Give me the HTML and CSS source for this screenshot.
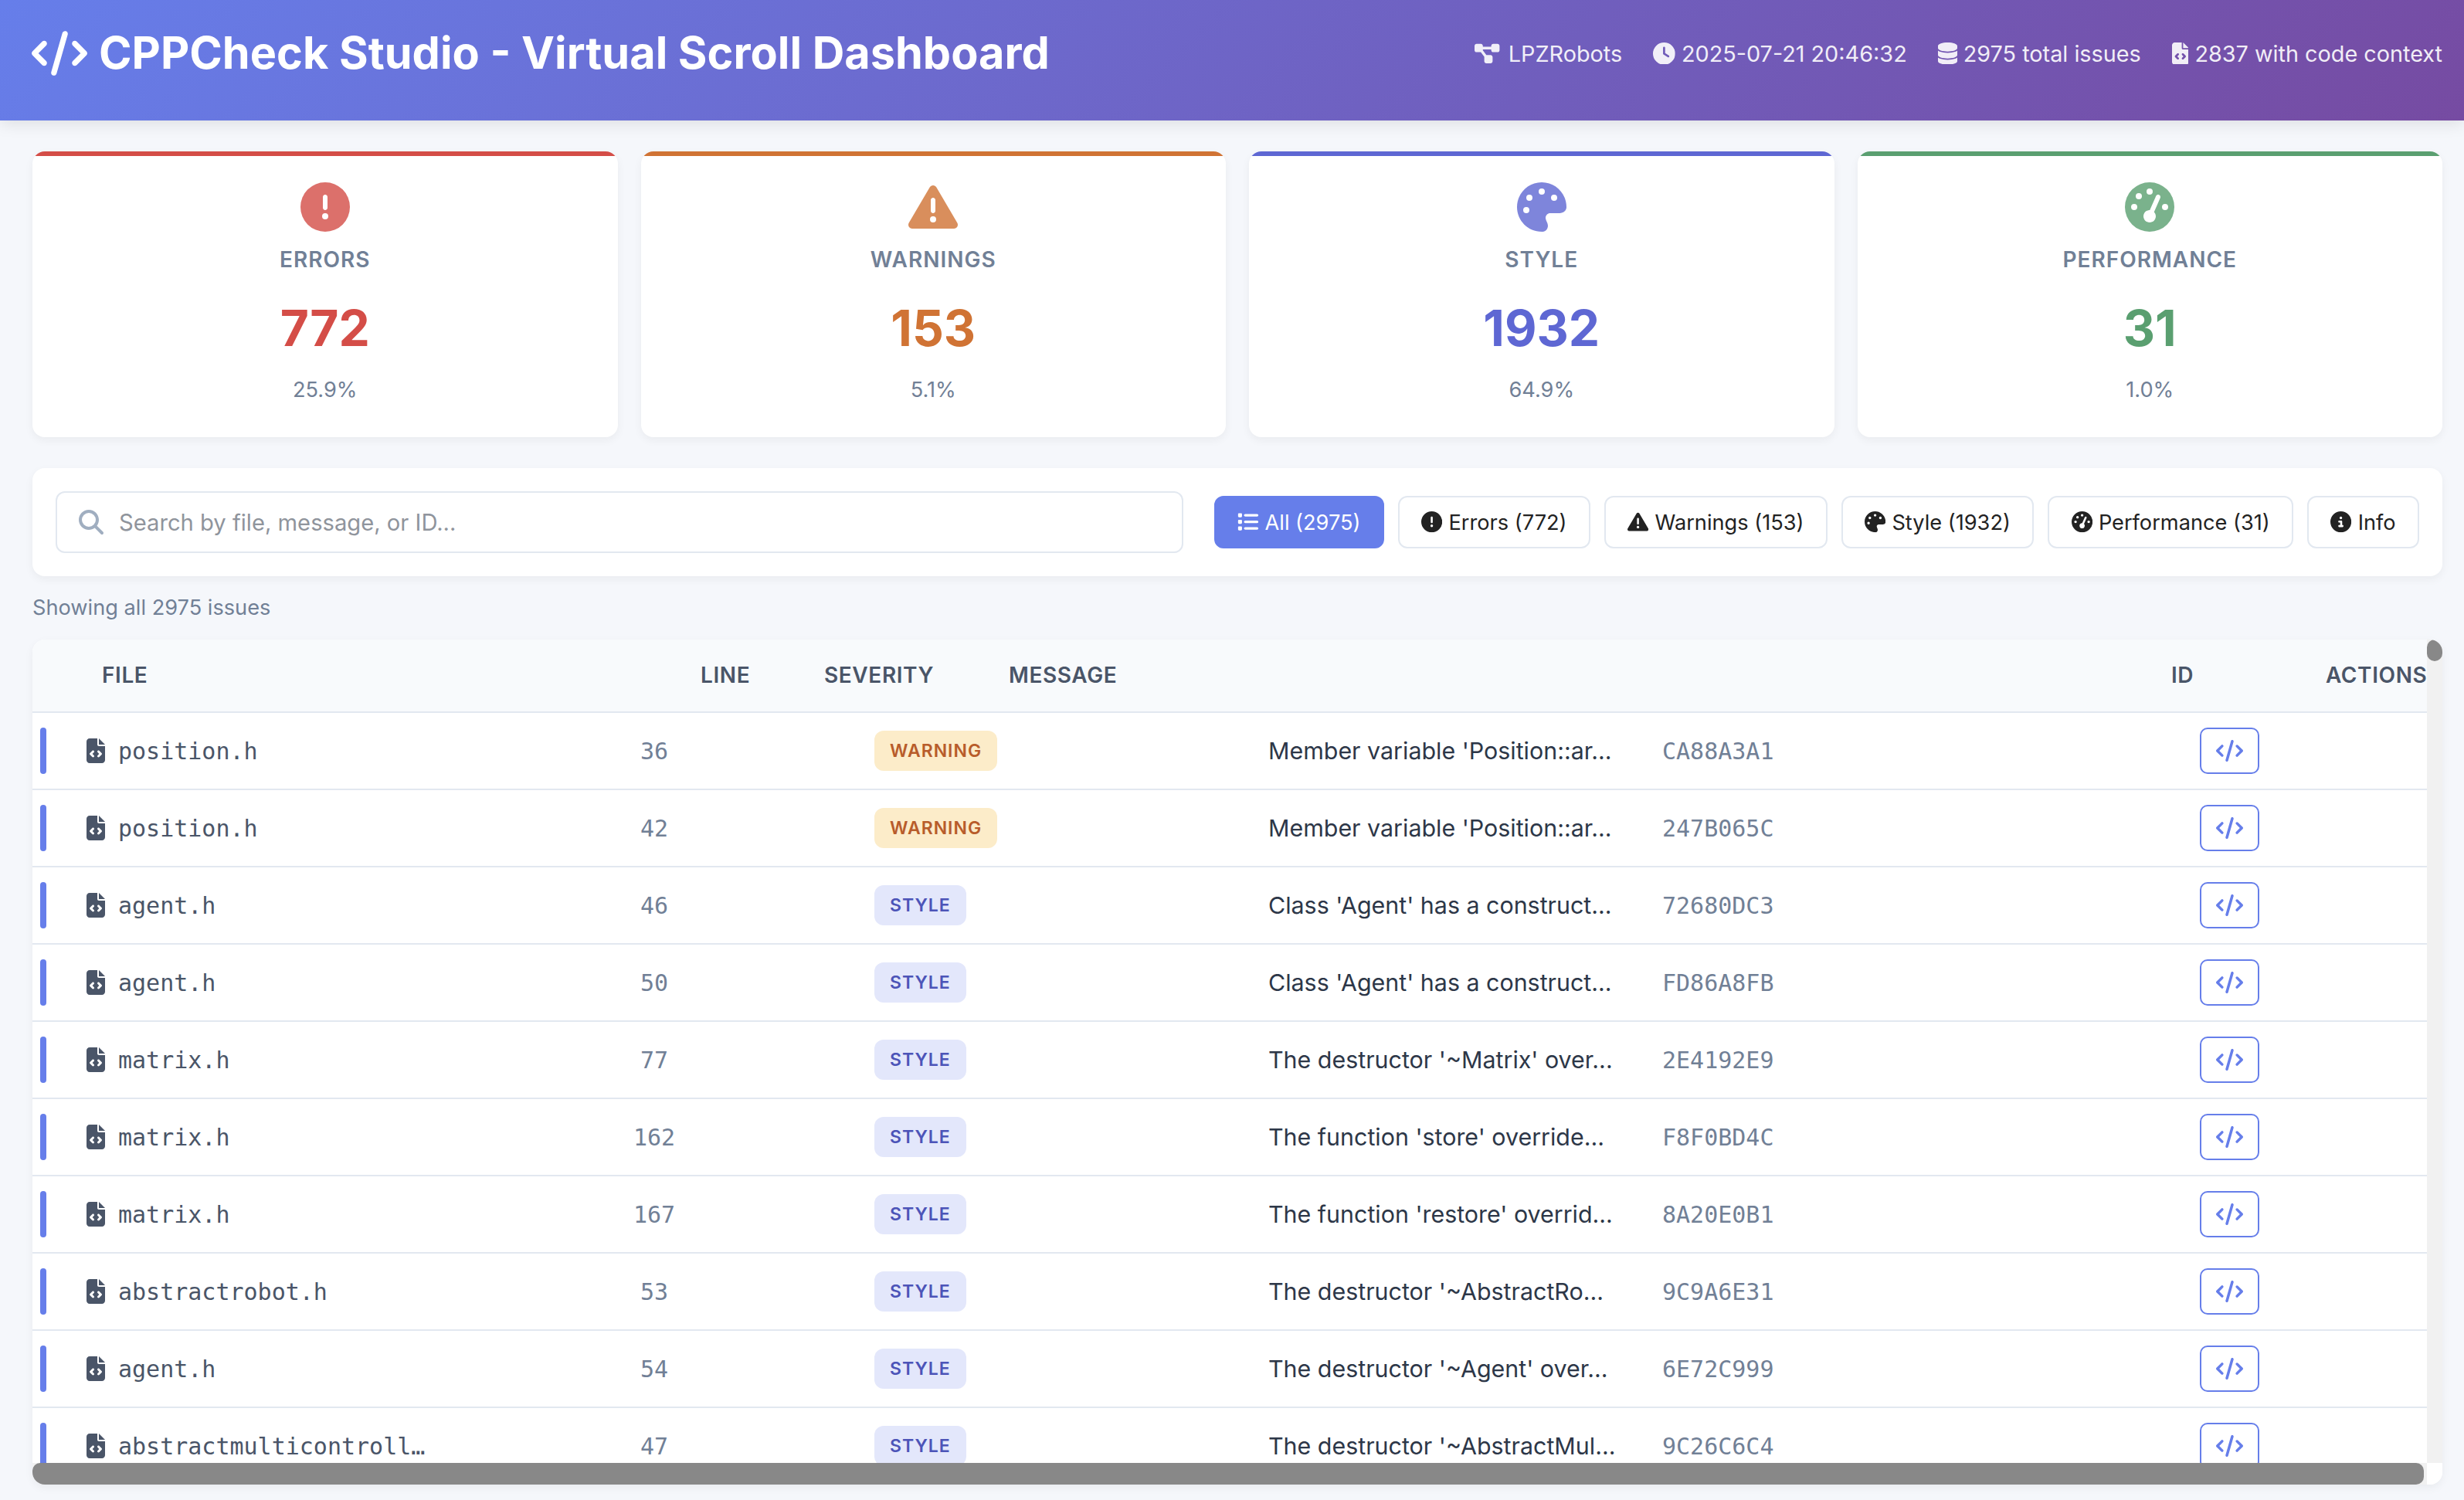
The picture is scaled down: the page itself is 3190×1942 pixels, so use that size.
FILE: index.html
```html
<!DOCTYPE html>
<html lang="en">
<head>
<meta charset="utf-8">
<title>CPPCheck Studio - Virtual Scroll Dashboard</title>
<link rel="stylesheet" href="styles.css">
</head>
<body>
<svg class="sprites" xmlns="http://www.w3.org/2000/svg" aria-hidden="true">
  <symbol id="i-error" viewBox="0 0 512 512"><path d="M256 512A256 256 0 1 0 256 0a256 256 0 1 0 0 512zm0-384c13.3 0 24 10.7 24 24V264c0 13.3-10.7 24-24 24s-24-10.7-24-24V152c0-13.3 10.7-24 24-24zM224 352a32 32 0 1 1 64 0 32 32 0 1 1 -64 0z"/></symbol>
  <symbol id="i-warn" viewBox="0 0 512 512"><path d="M256 32c14.2 0 27.3 7.5 34.5 19.8l216 368c7.3 12.4 7.3 27.7 .2 40.1S486.3 480 472 480H40c-14.3 0-27.6-7.7-34.7-20.1s-7-27.8 .2-40.1l216-368C228.7 39.5 241.8 32 256 32zm0 128c-13.3 0-24 10.7-24 24V296c0 13.3 10.7 24 24 24s24-10.7 24-24V184c0-13.3-10.7-24-24-24zm32 224a32 32 0 1 0 -64 0 32 32 0 1 0 64 0z"/></symbol>
  <symbol id="i-palette" viewBox="0 0 512 512"><path d="M512 256c0 .9 0 1.8 0 2.7c-.4 36.5-33.6 61.3-70.1 61.3H344c-26.5 0-48 21.5-48 48c0 3.4 .4 6.7 1 9.9c2.1 10.2 6.5 20 10.8 29.9c6.1 13.8 12.1 27.5 12.1 42c0 31.8-21.6 60.7-53.4 62c-3.5 .1-7 .2-10.6 .2C114.6 512 0 397.4 0 256S114.6 0 256 0S512 114.6 512 256zM128 288a32 32 0 1 0 -64 0 32 32 0 1 0 64 0zm0-96a32 32 0 1 0 0-64 32 32 0 1 0 0 64zM288 96a32 32 0 1 0 -64 0 32 32 0 1 0 64 0zm96 96a32 32 0 1 0 0-64 32 32 0 1 0 0 64z"/></symbol>
  <symbol id="i-gauge" viewBox="0 0 512 512"><path d="M0 256a256 256 0 1 1 512 0A256 256 0 1 1 0 256zM288 96a32 32 0 1 0 -64 0 32 32 0 1 0 64 0zM256 416c35.3 0 64-28.7 64-64c0-17.4-6.9-33.1-18.1-44.6L366 161.7c5.3-12.1-.2-26.3-12.3-31.6s-26.3 .2-31.6 12.3L257.9 288c-.6 0-1.3 0-1.9 0c-35.3 0-64 28.7-64 64s28.7 64 64 64zM176 144a32 32 0 1 0 -64 0 32 32 0 1 0 64 0zM96 288a32 32 0 1 0 0-64 32 32 0 1 0 0 64zm352-32a32 32 0 1 0 -64 0 32 32 0 1 0 64 0z"/></symbol>
  <symbol id="i-info" viewBox="0 0 512 512"><path d="M256 512A256 256 0 1 0 256 0a256 256 0 1 0 0 512zM216 336h24V272H216c-13.3 0-24-10.7-24-24s10.7-24 24-24h48c13.3 0 24 10.7 24 24v88h8c13.3 0 24 10.7 24 24s-10.7 24-24 24H216c-13.3 0-24-10.7-24-24s10.7-24 24-24zm40-208a32 32 0 1 1 0 64 32 32 0 1 1 0-64z"/></symbol>
  <symbol id="i-list" viewBox="0 0 512 512"><path d="M40 48C26.7 48 16 58.7 16 72v48c0 13.3 10.7 24 24 24H88c13.3 0 24-10.7 24-24V72c0-13.3-10.7-24-24-24H40zM192 64c-17.7 0-32 14.3-32 32s14.3 32 32 32H480c17.7 0 32-14.3 32-32s-14.3-32-32-32H192zm0 160c-17.7 0-32 14.3-32 32s14.3 32 32 32H480c17.7 0 32-14.3 32-32s-14.3-32-32-32H192zm0 160c-17.7 0-32 14.3-32 32s14.3 32 32 32H480c17.7 0 32-14.3 32-32s-14.3-32-32-32H192zM16 232v48c0 13.3 10.7 24 24 24H88c13.3 0 24-10.7 24-24V232c0-13.3-10.7-24-24-24H40c-13.3 0-24 10.7-24 24zM40 368c-13.3 0-24 10.7-24 24v48c0 13.3 10.7 24 24 24H88c13.3 0 24-10.7 24-24V392c0-13.3-10.7-24-24-24H40z"/></symbol>
  <symbol id="i-clock" viewBox="0 0 512 512"><path d="M256 0a256 256 0 1 1 0 512A256 256 0 1 1 256 0zM232 120V256c0 8 4 15.5 10.7 20l96 64c11 7.4 25.9 4.4 33.3-6.7s4.4-25.9-6.7-33.3L280 243.2V120c0-13.3-10.7-24-24-24s-24 10.7-24 24z"/></symbol>
  <symbol id="i-db" viewBox="0 0 448 512"><path d="M448 80v48c0 44.2-100.3 80-224 80S0 172.2 0 128V80C0 35.8 100.3 0 224 0S448 35.8 448 80zM393.2 214.7c20.8-7.4 39.9-16.9 54.8-28.6V288c0 44.2-100.3 80-224 80S0 332.2 0 288V186.1c14.9 11.8 34 21.2 54.8 28.6C99.7 230.7 159.5 240 224 240s124.3-9.3 169.2-25.3zM0 346.1c14.9 11.8 34 21.2 54.8 28.6C99.7 390.7 159.5 400 224 400s124.3-9.3 169.2-25.3c20.8-7.4 39.9-16.9 54.8-28.6V432c0 44.2-100.3 80-224 80S0 476.2 0 432V346.1z"/></symbol>
  <symbol id="i-file" viewBox="0 0 384 512"><path d="M64 0C28.7 0 0 28.7 0 64V448c0 35.3 28.7 64 64 64H320c35.3 0 64-28.7 64-64V160H256c-17.7 0-32-14.3-32-32V0H64zM256 0V128H384L256 0zM153 289l-31 31 31 31c9.4 9.4 9.4 24.6 0 33.9s-24.6 9.4-33.9 0L71 337c-9.4-9.4-9.4-24.6 0-33.9l48-48c9.4-9.4 24.6-9.4 33.9 0s9.4 24.6 0 33.9zM265 255l48 48c9.4 9.4 9.4 24.6 0 33.9l-48 48c-9.4 9.4-24.6 9.4-33.9 0s-9.4-24.6 0-33.9l31-31-31-31c-9.4-9.4-9.4-24.6 0-33.9s24.6-9.4 33.9 0z"/></symbol>
  <symbol id="i-code" viewBox="0 0 640 512"><path d="M392.8 1.2c-17-4.9-34.7 5-39.6 22l-128 448c-4.9 17 5 34.7 22 39.6s34.7-5 39.6-22l128-448c4.9-17-5-34.7-22-39.6zm80.6 120.1c-12.5 12.5-12.5 32.8 0 45.3L562.7 256l-89.4 89.4c-12.5 12.5-12.5 32.8 0 45.3s32.8 12.5 45.3 0l112-112c12.5-12.5 12.5-32.8 0-45.3l-112-112c-12.5-12.5-32.8-12.5-45.3 0zm-306.7 0c-12.5-12.5-32.8-12.5-45.3 0l-112 112c-12.5 12.5-12.5 32.8 0 45.3l112 112c12.5 12.5 32.8 12.5 45.3 0s12.5-32.8 0-45.3L77.3 256l89.4-89.4c12.5-12.5 12.5-32.8 0-45.3z"/></symbol>
  <symbol id="i-project" viewBox="0 0 640 512"><path d="M0 80C0 53.5 21.5 32 48 32h96c26.5 0 48 21.5 48 48V96H384V80c0-26.5 21.5-48 48-48h96c26.5 0 48 21.5 48 48v96c0 26.5-21.5 48-48 48H432c-26.5 0-48-21.5-48-48V160H192v16c0 1.7-.1 3.4-.3 5L272 288h96c26.5 0 48 21.5 48 48v96c0 26.5-21.5 48-48 48H272c-26.5 0-48-21.5-48-48V336c0-1.7 .1-3.4 .3-5L144 224H48c-26.5 0-48-21.5-48-48V80z"/></symbol>
  <symbol id="i-search" viewBox="0 0 512 512"><path d="M416 208c0 45.9-14.9 88.3-40 122.7L502.6 457.4c12.5 12.5 12.5 32.8 0 45.3s-32.8 12.5-45.3 0L330.7 376c-34.4 25.2-76.8 40-122.7 40C93.1 416 0 322.9 0 208S93.1 0 208 0S416 93.1 416 208zM208 352a144 144 0 1 0 0-288 144 144 0 1 0 0 288z"/></symbol>
</svg>

<header class="topbar">
  <h1 class="title"><svg class="title-icon"><use href="#i-code"/></svg>CPPCheck Studio - Virtual Scroll Dashboard</h1>
  <div class="meta">
    <span class="meta-item"><svg class="ic ic-project"><use href="#i-project"/></svg>LPZRobots</span>
    <span class="meta-item"><svg class="ic"><use href="#i-clock"/></svg>2025-07-21 20:46:32</span>
    <span class="meta-item"><svg class="ic ic-db"><use href="#i-db"/></svg>2975 total issues</span>
    <span class="meta-item"><svg class="ic ic-file"><use href="#i-file"/></svg>2837 with code context</span>
  </div>
</header>

<main class="page">
  <section class="stats">
    <article class="stat stat-error">
      <svg class="stat-icon"><use href="#i-error"/></svg>
      <div class="stat-label">Errors</div>
      <div class="stat-value">772</div>
      <div class="stat-pct">25.9%</div>
    </article>
    <article class="stat stat-warning">
      <svg class="stat-icon"><use href="#i-warn"/></svg>
      <div class="stat-label">Warnings</div>
      <div class="stat-value">153</div>
      <div class="stat-pct">5.1%</div>
    </article>
    <article class="stat stat-style">
      <svg class="stat-icon"><use href="#i-palette"/></svg>
      <div class="stat-label">Style</div>
      <div class="stat-value">1932</div>
      <div class="stat-pct">64.9%</div>
    </article>
    <article class="stat stat-perf">
      <svg class="stat-icon"><use href="#i-gauge"/></svg>
      <div class="stat-label">Performance</div>
      <div class="stat-value">31</div>
      <div class="stat-pct">1.0%</div>
    </article>
  </section>

  <section class="controls">
    <div class="search">
      <svg class="search-icon"><use href="#i-search"/></svg>
      <input class="search-input" type="text" placeholder="Search by file, message, or ID...">
    </div>
    <div class="filters">
      <button class="filter filter-active"><svg class="ic-btn"><use href="#i-list"/></svg>All (2975)</button>
      <button class="filter"><svg class="ic-btn"><use href="#i-error"/></svg>Errors (772)</button>
      <button class="filter"><svg class="ic-btn"><use href="#i-warn"/></svg>Warnings (153)</button>
      <button class="filter"><svg class="ic-btn"><use href="#i-palette"/></svg>Style (1932)</button>
      <button class="filter"><svg class="ic-btn"><use href="#i-gauge"/></svg>Performance (31)</button>
      <button class="filter"><svg class="ic-btn"><use href="#i-info"/></svg>Info</button>
    </div>
  </section>

  <div class="result-count">Showing all 2975 issues</div>

  <section class="table-frame">
    <div class="table-view">
      <div class="table-inner">
        <div class="thead">
          <div>File</div><div>Line</div><div>Severity</div><div>Message</div><div>ID</div><div>Actions</div>
        </div>

        <div class="row"><span class="bar"></span><div class="file"><svg class="file-icon"><use href="#i-file"/></svg><span>position.h</span></div><div class="line">36</div><div><span class="badge badge-warning">Warning</span></div><div class="msg">Member variable 'Position::ar...</div><div class="id">CA88A3A1</div><div class="act"><button class="code-btn"><svg class="code-icon"><use href="#i-code"/></svg></button></div></div>
        <div class="row"><span class="bar"></span><div class="file"><svg class="file-icon"><use href="#i-file"/></svg><span>position.h</span></div><div class="line">42</div><div><span class="badge badge-warning">Warning</span></div><div class="msg">Member variable 'Position::ar...</div><div class="id">247B065C</div><div class="act"><button class="code-btn"><svg class="code-icon"><use href="#i-code"/></svg></button></div></div>
        <div class="row"><span class="bar"></span><div class="file"><svg class="file-icon"><use href="#i-file"/></svg><span>agent.h</span></div><div class="line">46</div><div><span class="badge badge-style">Style</span></div><div class="msg">Class 'Agent' has a construct...</div><div class="id">72680DC3</div><div class="act"><button class="code-btn"><svg class="code-icon"><use href="#i-code"/></svg></button></div></div>
        <div class="row"><span class="bar"></span><div class="file"><svg class="file-icon"><use href="#i-file"/></svg><span>agent.h</span></div><div class="line">50</div><div><span class="badge badge-style">Style</span></div><div class="msg">Class 'Agent' has a construct...</div><div class="id">FD86A8FB</div><div class="act"><button class="code-btn"><svg class="code-icon"><use href="#i-code"/></svg></button></div></div>
        <div class="row"><span class="bar"></span><div class="file"><svg class="file-icon"><use href="#i-file"/></svg><span>matrix.h</span></div><div class="line">77</div><div><span class="badge badge-style">Style</span></div><div class="msg">The destructor '~Matrix' over...</div><div class="id">2E4192E9</div><div class="act"><button class="code-btn"><svg class="code-icon"><use href="#i-code"/></svg></button></div></div>
        <div class="row"><span class="bar"></span><div class="file"><svg class="file-icon"><use href="#i-file"/></svg><span>matrix.h</span></div><div class="line">162</div><div><span class="badge badge-style">Style</span></div><div class="msg">The function 'store' override...</div><div class="id">F8F0BD4C</div><div class="act"><button class="code-btn"><svg class="code-icon"><use href="#i-code"/></svg></button></div></div>
        <div class="row"><span class="bar"></span><div class="file"><svg class="file-icon"><use href="#i-file"/></svg><span>matrix.h</span></div><div class="line">167</div><div><span class="badge badge-style">Style</span></div><div class="msg">The function 'restore' overrid...</div><div class="id">8A20E0B1</div><div class="act"><button class="code-btn"><svg class="code-icon"><use href="#i-code"/></svg></button></div></div>
        <div class="row"><span class="bar"></span><div class="file"><svg class="file-icon"><use href="#i-file"/></svg><span>abstractrobot.h</span></div><div class="line">53</div><div><span class="badge badge-style">Style</span></div><div class="msg">The destructor '~AbstractRo...</div><div class="id">9C9A6E31</div><div class="act"><button class="code-btn"><svg class="code-icon"><use href="#i-code"/></svg></button></div></div>
        <div class="row"><span class="bar"></span><div class="file"><svg class="file-icon"><use href="#i-file"/></svg><span>agent.h</span></div><div class="line">54</div><div><span class="badge badge-style">Style</span></div><div class="msg">The destructor '~Agent' over...</div><div class="id">6E72C999</div><div class="act"><button class="code-btn"><svg class="code-icon"><use href="#i-code"/></svg></button></div></div>
        <div class="row"><span class="bar"></span><div class="file"><svg class="file-icon"><use href="#i-file"/></svg><span>abstractmulticontroll…</span></div><div class="line">47</div><div><span class="badge badge-style">Style</span></div><div class="msg">The destructor '~AbstractMul...</div><div class="id">9C26C6C4</div><div class="act"><button class="code-btn"><svg class="code-icon"><use href="#i-code"/></svg></button></div></div>
      </div>
    </div>
    <div class="vtrack"><div class="vthumb"></div></div>
    <div class="htrack"><div class="hthumb"></div></div>
    <div class="corner"></div>
  </section>
</main>
</body>
</html>
```

FILE: styles.css
```css
* { box-sizing: border-box; }

html, body { height: 100%; }

body {
  margin: 0;
  display: flex;
  flex-direction: column;
  overflow: hidden;
  background: #f5f7fb;
  color: #2d3748;
  font-family: Inter, "Liberation Sans", sans-serif;
  font-size: 28px;
}

.sprites { display: none; }

svg { fill: currentColor; display: block; flex: none; }

/* top bar */
.topbar {
  position: relative;
  z-index: 2;
  flex: none;
  height: 156px;
  padding: 0 28px 18px 41px;
  display: flex;
  align-items: center;
  justify-content: space-between;
  color: #fff;
  background: linear-gradient(135deg, #667eea 0%, #764ba2 100%);
  box-shadow: 0 4px 20px rgba(0, 0, 0, 0.1);
}

.title {
  margin: 0;
  display: flex;
  align-items: center;
  gap: 15px;
  font-size: 57.6px;
  font-weight: 700;
  line-height: 1.2;
}

.title-icon { width: 72px; height: 58px; }

.meta { display: flex; align-items: center; gap: 40px; font-size: 28.8px; opacity: 0.9; }

.meta-item { display: flex; align-items: center; gap: 8px; }

.ic { width: 28.8px; height: 28.8px; }
.ic-project { width: 36px; }
.ic-db { width: 25px; }
.ic-file { width: 21.6px; }

/* page */
.page {
  flex: 1;
  min-height: 0;
  padding: 40px 28px 20px 42px;
  display: flex;
  flex-direction: column;
}

.stats {
  flex: none;
  display: grid;
  grid-template-columns: repeat(4, 1fr);
  gap: 30px;
  margin-bottom: 40px;
}

.stat {
  position: relative;
  overflow: hidden;
  height: 370px;
  padding-top: 40px;
  display: flex;
  flex-direction: column;
  align-items: center;
  background: #fff;
  border-radius: 16px;
  box-shadow: 0 4px 12px rgba(0, 0, 0, 0.05);
}

.stat::before {
  content: "";
  position: absolute;
  inset: 0 0 auto 0;
  height: 6px;
  background: currentColor;
}

.stat-error { color: #d44d47; }
.stat-warning { color: #d07334; }
.stat-style { color: #5e67d3; }
.stat-perf { color: #5a9f70; }

.stat-icon { width: 64px; height: 64px; opacity: 0.8; }

.stat-label {
  margin-top: 19px;
  font-size: 28px;
  line-height: 34px;
  font-weight: 600;
  letter-spacing: 1px;
  text-transform: uppercase;
  color: #718096;
}

.stat-value {
  margin-top: 32px;
  font-size: 64px;
  line-height: 80px;
  font-weight: 700;
}

.stat-pct {
  margin-top: 23px;
  font-size: 27.2px;
  line-height: 34px;
  color: #718096;
}

/* controls */
.controls {
  flex: none;
  height: 140px;
  padding: 0 30px;
  display: flex;
  align-items: center;
  gap: 40px;
  background: #fff;
  border-radius: 16px;
  box-shadow: 0 4px 12px rgba(0, 0, 0, 0.05);
}

.search { position: relative; flex: 1; }

.search-icon {
  position: absolute;
  left: 30px;
  top: 24px;
  width: 32px;
  height: 32px;
  color: #a0aec0;
}

.search-input {
  width: 100%;
  height: 80px;
  padding: 0 40px 0 80px;
  border: 2px solid #e2e8f0;
  border-radius: 12px;
  outline: none;
  font-family: inherit;
  font-size: 29.2px;
}

.search-input::placeholder { color: #8f949c; opacity: 1; }

.filters { flex: none; display: flex; gap: 18px; }

.filter {
  height: 68px;
  padding: 0 28.4px;
  display: flex;
  align-items: center;
  gap: 8px;
  background: #fff;
  border: 2px solid #e2e8f0;
  border-radius: 12px;
  color: #222;
  font-family: inherit;
  font-size: 27.2px;
}

.filter-active { background: #667eea; border-color: #667eea; color: #fff; }

.ic-btn { width: 27.2px; height: 27.2px; }

.result-count {
  flex: none;
  height: 82px;
  padding-bottom: 2px;
  display: flex;
  align-items: center;
  color: #718096;
  font-size: 27.2px;
}

/* table */
.table-frame {
  flex: 1;
  min-height: 0;
  display: grid;
  grid-template-columns: minmax(0, 1fr) 20px;
  grid-template-rows: minmax(0, 1fr) 28px;
  overflow: hidden;
  background: #fff;
  border-radius: 16px;
  box-shadow: 0 4px 12px rgba(0, 0, 0, 0.05);
}

.table-view { overflow: hidden; }

.table-inner { width: 3100px; }

.thead {
  height: 95px;
  padding: 0 0 2px 90px;
  display: grid;
  grid-template-columns: 775px 160px 239px 1505px 200px 131px;
  align-items: center;
  background: #f8fafc;
  border-bottom: 2px solid #e2e8f0;
  color: #4a5568;
  font-size: 28px;
  font-weight: 600;
  letter-spacing: 0.6px;
  text-transform: uppercase;
  white-space: nowrap;
}

.row {
  height: 100px;
  padding-left: 10px;
  display: grid;
  grid-template-columns: 8px 502px 570px 510px 510px 696px 77px;
  align-items: center;
  border-bottom: 2px solid #e2e8f0;
}

.bar { width: 8px; height: 60px; border-radius: 4px; background: #667eea; }

.file {
  margin-left: 52px;
  display: flex;
  align-items: center;
  gap: 17px;
  color: #4a5568;
  font-family: "DejaVu Sans Mono", monospace;
  font-size: 30px;
  white-space: nowrap;
}

.file-icon { width: 24px; height: 32px; }

.line {
  color: #718096;
  font-family: "DejaVu Sans Mono", monospace;
  font-size: 30px;
  text-align: center;
}

.badge {
  display: inline-flex;
  align-items: center;
  height: 52px;
  padding: 0 20px;
  border-radius: 12px;
  font-size: 23px;
  font-weight: 600;
  letter-spacing: 1px;
  text-transform: uppercase;
  vertical-align: middle;
}

.badge-warning { background: #fcecc9; color: #b85c2b; }
.badge-style { background: #e3e7fb; color: #4c54b8; }

.msg { color: #2d3748; font-size: 30.4px; white-space: nowrap; }

.id {
  color: #718096;
  font-family: "DejaVu Sans Mono", monospace;
  font-size: 30px;
}

.code-btn {
  width: 77px;
  height: 60px;
  padding: 0;
  display: flex;
  align-items: center;
  justify-content: center;
  background: #fff;
  border: 2px solid #667eea;
  border-radius: 10px;
  color: #667eea;
}

.code-icon { width: 35px; height: 28px; }

/* drawn scrollbars */
.vtrack { background: #f1f1f1; }
.vthumb { height: 28px; border-radius: 10px; background: #888; }

.htrack { background: #f1f1f1; }
.hthumb { width: calc(100% - 4px); height: 100%; border-radius: 10px; background: #888; }

.corner { background: #fff; }
```
